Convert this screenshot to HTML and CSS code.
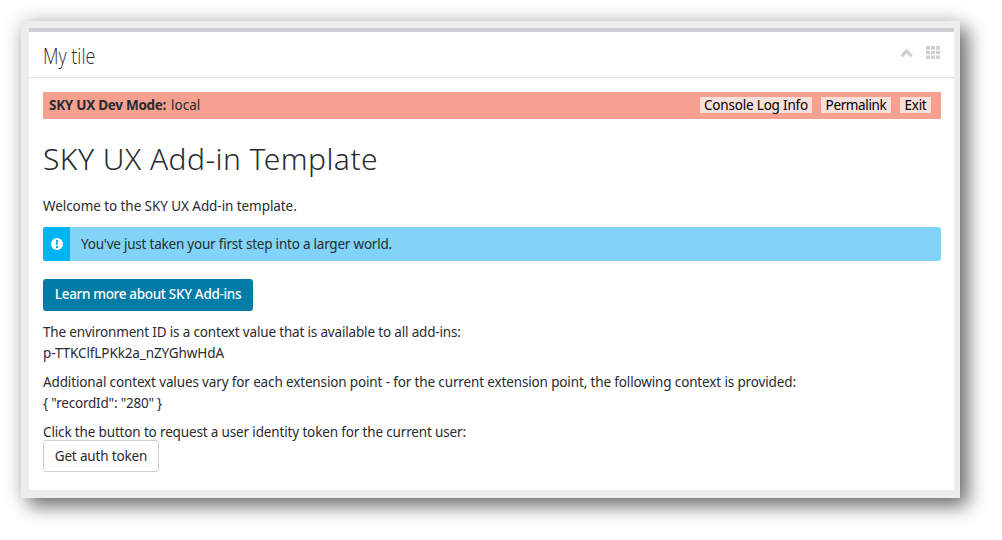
FILE: index.html
```html
<!DOCTYPE html>
<html lang="en">
<head>
<meta charset="utf-8">
<title>My tile</title>
<link rel="stylesheet" href="styles.css">
</head>
<body>
<main class="frame">
  <section class="tile">
    <header class="tile-header">
      <h2 class="tile-title"><span class="t-title">My tile</span></h2>
      <div class="tile-tools">
        <svg class="chevron" width="14" height="10" viewBox="0 0 14 10"><path d="M1.6 8.1 L6.6 3.1 L11.6 8.1" fill="none" stroke="#cdcfd2" stroke-width="3.4"/></svg>
        <svg class="grip" width="14" height="13" viewBox="0 0 14 13" fill="#cdcfd2"><path d="M0 0h4v3.8H0zM5 0h4v3.8H5zM10 0h4v3.8h-4zM0 5h4v3.2H0zM5 5h4v3.2H5zM10 5h4v3.2h-4zM0 9.4h4V13H0zM5 9.4h4V13H5zM10 9.4h4V13h-4z"/></svg>
      </div>
    </header>
    <div class="tile-body">
      <div class="dev-bar">
        <div class="dev-mode"><strong class="t-mode">SKY UX Dev Mode:</strong><span class="t-local">local</span></div>
        <div class="dev-actions">
          <button class="dev-btn w-console"><span class="t-console">Console Log Info</span></button>
          <button class="dev-btn w-perma"><span class="t-perma">Permalink</span></button>
          <button class="dev-btn w-exit"><span class="t-exit">Exit</span></button>
        </div>
      </div>
      <h1 class="heading"><span class="t-heading">SKY UX Add-in Template</span></h1>
      <p class="welcome"><span class="t-welcome">Welcome to the SKY UX Add-in template.</span></p>
      <div class="alert">
        <div class="alert-icon"><svg width="12" height="12" viewBox="0 0 12 12"><circle cx="6" cy="6" r="6" fill="#fff"/><path d="M4.9 2h2.2L6.8 7H5.2zM5 8h2v1.9H5z" fill="#00b4f1"/></svg></div>
        <div class="alert-text"><span class="t-alert">You've just taken your first step into a larger world.</span></div>
      </div>
      <button class="btn primary"><span class="t-learn">Learn more about SKY Add-ins</span></button>
      <p class="para"><span class="t-env">The environment ID is a context value that is available to all add-ins:</span><br><span class="t-id">p-TTKClfLPKk2a_nZYGhwHdA</span></p>
      <p class="para"><span class="t-add">Additional context values vary for each extension point - for the current extension point, the following context is provided:</span><br><span class="t-rec">{ "recordId": "280" }</span></p>
      <p class="para last"><span class="t-click">Click the button to request a user identity token for the current user:</span></p>
      <button class="btn secondary"><span class="t-auth">Get auth token</span></button>
    </div>
  </section>
</main>
</body>
</html>
```
FILE: styles.css
```css
* { box-sizing: border-box; }
body { margin: 0; padding: 21px; width: 1002px; height: 540px; overflow: hidden; background: #fff; color: #282b31; font: 13.5px/20px "Noto Sans", sans-serif; }
h1, h2, p { margin: 0; font-weight: 400; }
span, strong { white-space: nowrap; }
button { font: inherit; color: inherit; border: 0; padding: 0; }
.frame { width: 939px; height: 477px; padding: 7px 6px 8px 8px; background: #ededed; box-shadow: 8px 8px 18px rgba(0,0,0,.54), 0 0 20px rgba(0,0,0,.14); }
.tile { height: 462px; background: #fff; border-top: 4px solid #cdcfd2; }
.tile-header { display: flex; justify-content: space-between; height: 46px; padding: 0 14px; border-bottom: 1px solid #e2e3e5; }
.tile-title { font: 300 22px/46px "Open Sans", sans-serif; }
.t-title { display: inline-block; transform: scaleX(.815); transform-origin: 0 50%; }
.tile-tools { display: flex; gap: 12px; padding-top: 14px; }
.chevron { margin-top: 2px; }
.tile-body { padding: 14px 13px 0 14px; }
.dev-bar { display: flex; justify-content: space-between; height: 27px; padding: 0 10px 0 6px; background: #f7a08f; line-height: 26px; }
.dev-mode { display: flex; gap: 5px; }
.dev-actions { display: flex; gap: 9px; padding-top: 5px; color: #000; }
.dev-btn { height: 16px; line-height: 16px; background: #f9dfda; }
.w-console { width: 112px; }
.w-perma { width: 70px; }
.w-exit { width: 31px; }
.heading { margin-top: 20px; font: 300 30px/40px "Noto Sans", "Open Sans", sans-serif; }
.welcome { margin-top: 17px; }
.alert { display: flex; height: 34px; margin-top: 11px; border-radius: 3px; overflow: hidden; background: #81d4f7; line-height: 34px; }
.alert-icon { display: flex; align-items: center; justify-content: center; width: 27px; padding-left: 1px; background: #00b4f1; }
.alert-text { padding-left: 11px; }
.btn { display: block; border-radius: 3px; text-align: center; }
.primary { width: 210px; height: 32px; margin-top: 18px; padding-bottom: 2px; background: #007ca6; color: #fff; font-weight: 500; line-height: 30px; }
.para { margin-top: 8px; line-height: 21px; }
.primary + .para { margin-top: 11px; }
.last { height: 18px; }
.secondary { width: 116px; height: 32px; border: 1px solid #cdcfd2; background: #fff; line-height: 30px; }
.t-mode { letter-spacing: -.28px; }
.t-console { letter-spacing: -.19px; }
.t-perma { letter-spacing: -.36px; }
.t-exit { letter-spacing: -.25px; }
.t-heading { letter-spacing: .44px; }
.t-welcome { letter-spacing: -.07px; }
.t-alert { letter-spacing: -.22px; }
.t-learn { letter-spacing: -.33px; }
.t-env { letter-spacing: -.17px; }
.t-id { letter-spacing: -.1px; }
.t-add { letter-spacing: -.14px; }
.t-rec { letter-spacing: -.2px; }
.t-click { letter-spacing: -.15px; }
.t-auth { letter-spacing: -.15px; }
```
